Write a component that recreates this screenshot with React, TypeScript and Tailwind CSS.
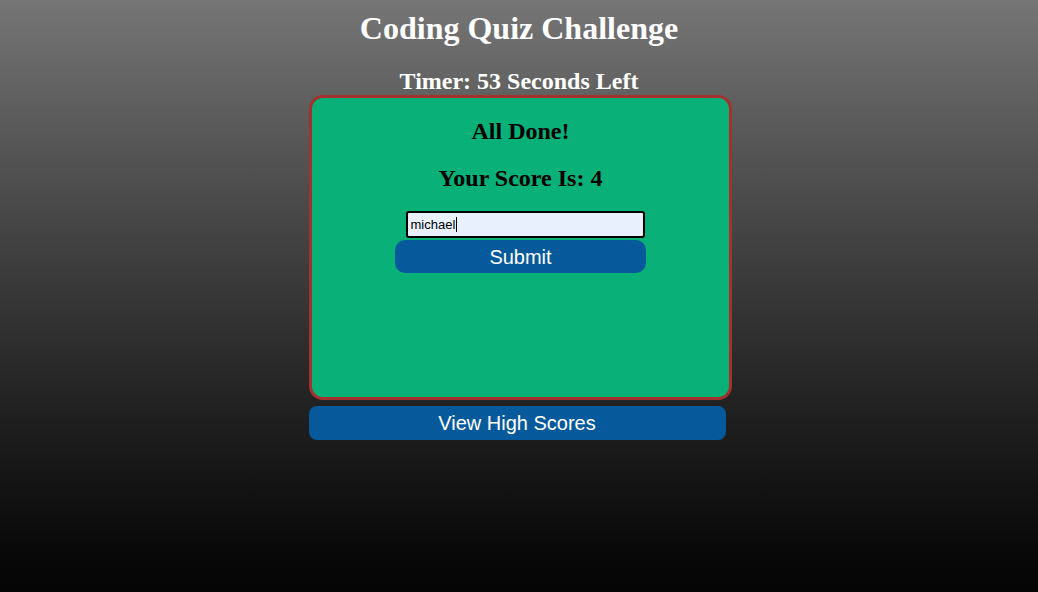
import React from 'react';

const App: React.FC = () => {
  return (
    <div className="min-h-[592px] w-full bg-gradient-to-b from-[#767676] to-[#040404] flex flex-col items-center font-['Liberation_Serif',serif]">
      <h1 className="mt-[10px] text-[32px] leading-[36px] font-bold text-white">Coding Quiz Challenge</h1>
      <h2 className="mt-[21px] text-[24px] leading-[28px] font-bold text-white">Timer: 53 Seconds Left</h2>
      <div className="w-[423px] h-[305px] ml-[3px] border-[3px] border-[#a3322f] rounded-[14px] bg-[#09b077] flex flex-col items-center pt-[19px]">
        <h2 className="text-[24px] leading-[28px] font-bold text-black">All Done!</h2>
        <h2 className="mt-[19px] text-[24px] leading-[28px] font-bold text-black">Your Score Is: 4</h2>
        <div className="mt-[19px] ml-[9px] relative">
          <input
            defaultValue="michael"
            className="w-[239px] h-[27px] border-2 border-black rounded-[3px] bg-[#e8f0fe] px-[3px] text-[13px] text-black font-['Liberation_Sans',sans-serif] outline-none"
          />
          <span className="absolute left-[50px] top-[6px] w-px h-[15px] bg-black" />
        </div>
        <button className="mt-[2px] w-[251px] h-[33px] rounded-[10px] bg-[#065a9b] text-white text-[20px] font-['Liberation_Sans',sans-serif]">
          Submit
        </button>
      </div>
      <button className="mt-[6px] -ml-[4px] w-[417px] h-[34px] rounded-[8px] bg-[#065a9b] text-white text-[20px] font-['Liberation_Sans',sans-serif]">
        View High Scores
      </button>
    </div>
  );
};

export default App;
